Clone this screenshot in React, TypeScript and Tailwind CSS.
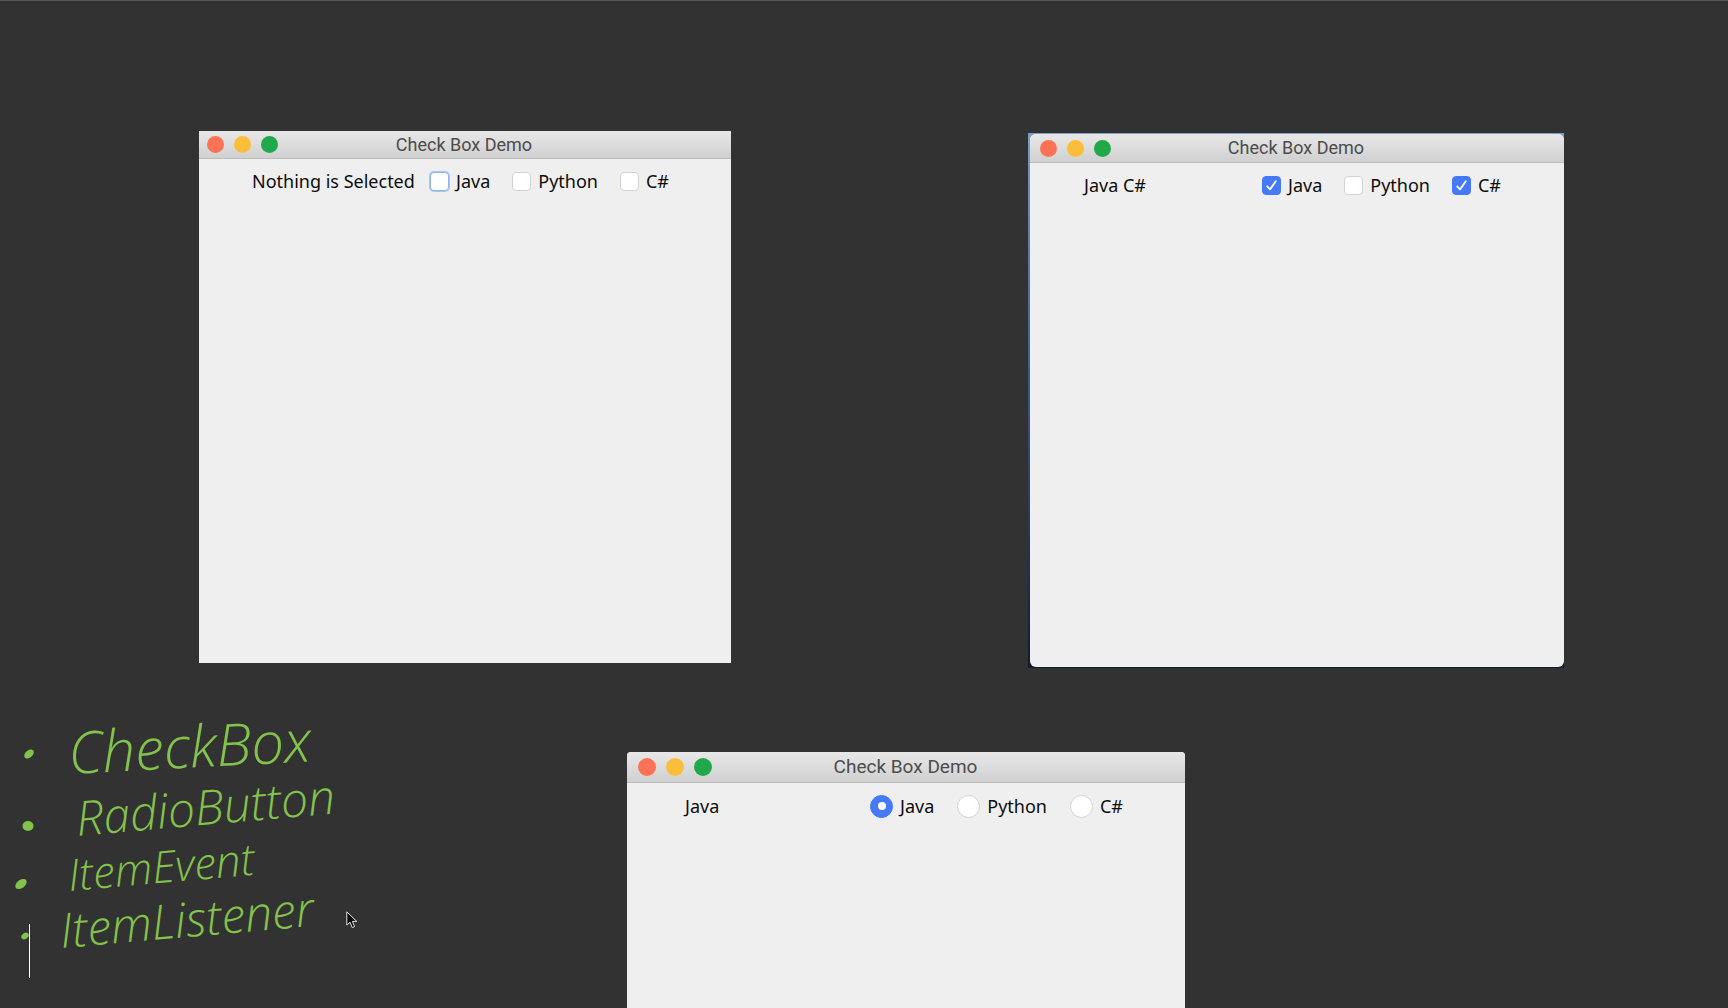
import { useState, type ReactNode } from "react";

type Kind = "checkbox" | "radio";

interface DemoWindowProps {
  id: string;
  kind: Kind;
  large?: boolean;
  label: string;
  selected: string[];
  focused?: string;
  className: string;
  headerClass: string;
  bodyClass: string;
}

const LANGUAGES = ["Java", "Python", "C#"];

function TrafficLights({ large }: { large?: boolean }) {
  const size = large ? "size-[18px]" : "size-[17px]";
  return (
    <div className="flex gap-[10px]">
      <button aria-label="Close" className={`${size} rounded-full bg-[#fb7257]`} />
      <button aria-label="Minimize" className={`${size} rounded-full bg-[#fbbe3a]`} />
      <button aria-label="Zoom" className={`${size} rounded-full bg-[#20a84a]`} />
    </div>
  );
}

function Option({
  id,
  kind,
  name,
  checked,
  focused,
  onChange,
}: {
  id: string;
  kind: Kind;
  name: string;
  checked: boolean;
  focused: boolean;
  onChange: () => void;
}) {
  const radio = kind === "radio";
  const shape = radio ? "size-[23px] rounded-full" : "size-[19px] rounded-[4px]";
  const tone = checked
    ? "border-[#4579f8] bg-[#4579f8]"
    : focused
      ? "border-[#8fb4e6] bg-white ring-1 ring-[#a9c6ee]"
      : "border-[#d2d2d2] bg-white";
  return (
    <div className="flex items-center gap-[7px]">
      <span className="relative flex items-center justify-center">
        <input
          id={id}
          type={kind}
          name={radio ? "language" : name}
          checked={checked}
          onChange={onChange}
          className={`appearance-none border ${shape} ${tone}`}
        />
        {checked &&
          (radio ? (
            <span className="pointer-events-none absolute size-2 rounded-full bg-white" />
          ) : (
            <svg viewBox="0 0 19 19" className="pointer-events-none absolute size-[19px]" fill="none" stroke="white" strokeWidth="1.8" strokeLinecap="round" strokeLinejoin="round">
              <path d="M5.2 10.4 8 13.4 13.8 5.2" />
            </svg>
          ))}
      </span>
      <label htmlFor={id}>{name}</label>
    </div>
  );
}

function DemoWindow({ id, kind, large, label, selected, focused, className, headerClass, bodyClass }: DemoWindowProps) {
  const [values, setValues] = useState(selected);
  const toggle = (name: string) =>
    setValues((old) =>
      kind === "radio" ? [name] : old.includes(name) ? old.filter((v) => v !== name) : [...old, name],
    );
  return (
    <section className={`flex flex-col overflow-hidden bg-[#efefef] ${className}`}>
      <header
        className={`grid shrink-0 grid-cols-[1fr_auto_1fr] items-center border-b border-[#bcbcbc] bg-linear-to-b from-[#e8e8e8] to-[#d0d0d0] ${headerClass}`}
      >
        <TrafficLights large={large} />
        <h2 className={`font-[Roboto,sans-serif] text-[#4c4c4c] ${large ? "text-[19px]" : "text-[18px]"} leading-6`}>
          Check Box Demo
        </h2>
      </header>
      <div className={`flex items-center font-['Noto_Sans',sans-serif] text-[18px] leading-6 text-[#0d0d0d] ${bodyClass}`}>
        <output className={large ? "w-[185px]" : "w-[178px]"}>{label}</output>
        <div className={large ? "flex gap-[23px]" : "flex gap-[22px]"}>
          {LANGUAGES.map((name) => (
            <Option
              key={name}
              id={`${id}-${name}`}
              kind={kind}
              name={name}
              checked={values.includes(name)}
              focused={focused === name}
              onChange={() => toggle(name)}
            />
          ))}
        </div>
      </div>
    </section>
  );
}

function Note({ row, className, bullet, children }: { row: string; className: string; bullet: ReactNode; children: string }) {
  return (
    <li className={`flex items-center ${row}`}>
      <svg viewBox="0 0 40 40" className="size-10 shrink-0 fill-[#83c24c]">
        {bullet}
      </svg>
      <span className={`origin-left leading-none whitespace-nowrap ${className}`}>{children}</span>
    </li>
  );
}

function Notes() {
  return (
    <ul className="flex w-[380px] shrink-0 flex-col pt-[18px] font-['Open_Sans',sans-serif] font-light text-[#83c24c] italic">
      <Note row="h-[68px]" className="ml-7 -rotate-3 text-[58px]" bullet={<ellipse cx="29" cy="22" rx="5.5" ry="3.5" transform="rotate(-40 29 22)" />}>
        CheckBox
      </Note>
      <Note row="h-16" className="ml-9 -rotate-5 text-[48px]" bullet={<ellipse cx="28" cy="28" rx="5.5" ry="5" />}>
        RadioButton
      </Note>
      <Note row="h-12" className="ml-7 -rotate-5 text-[44px]" bullet={<ellipse cx="21" cy="30" rx="6.5" ry="4" transform="rotate(-38 21 30)" />}>
        ItemEvent
      </Note>
      <Note row="h-16" className="ml-5 -rotate-5 text-[48px]" bullet={<ellipse cx="25" cy="26" rx="4" ry="3" transform="rotate(-38 25 26)" />}>
        ItemListener
      </Note>
    </ul>
  );
}

export default function App() {
  return (
    <main className="relative flex h-screen flex-col overflow-hidden border-t border-[#565656] bg-[#323232]">
      <div className="flex items-start justify-between pt-[130px] pr-[164px] pl-[199px]">
        <DemoWindow
          id="first"
          kind="checkbox"
          label="Nothing is Selected"
          selected={[]}
          focused="Java"
          className="h-[532px] w-[532px]"
          headerClass="h-7 pr-[10px] pl-2"
          bodyClass="pt-[10px] pl-[53px]"
        />
        <div className="mt-0.5 bg-linear-to-b from-[#7d9cc8] via-[#3b5580] to-[#101c30] pt-px pb-px pl-0.5">
          <DemoWindow
            id="second"
            kind="checkbox"
            label="Java C#"
            selected={["Java", "C#"]}
            className="h-[533px] w-[534px] rounded-md"
            headerClass="h-[29px] pr-3 pl-[10px]"
            bodyClass="pt-[10px] pl-[54px]"
          />
        </div>
      </div>
      <div className="mt-8 flex min-h-0 flex-1">
        <Notes />
        <DemoWindow
          id="third"
          kind="radio"
          large
          label="Java"
          selected={["Java"]}
          className="mt-[52px] ml-[247px] w-[558px] rounded-t"
          headerClass="h-[31px] pr-3 pl-[11px]"
          bodyClass="pt-[11px] pl-[58px]"
        />
      </div>
      <div className="absolute bottom-[30px] left-[29px] h-[54px] w-px bg-white" />
      <svg viewBox="0 0 12 18" className="absolute bottom-[79px] left-[346px] h-[18px] w-3" fill="#0a0a0a" stroke="#e4e4e4" strokeWidth="1" strokeLinejoin="round">
        <path d="M.8.8V14L4 11.2 6.2 16.6 8.6 15.6 6.4 10.4H10.8Z" />
      </svg>
    </main>
  );
}
